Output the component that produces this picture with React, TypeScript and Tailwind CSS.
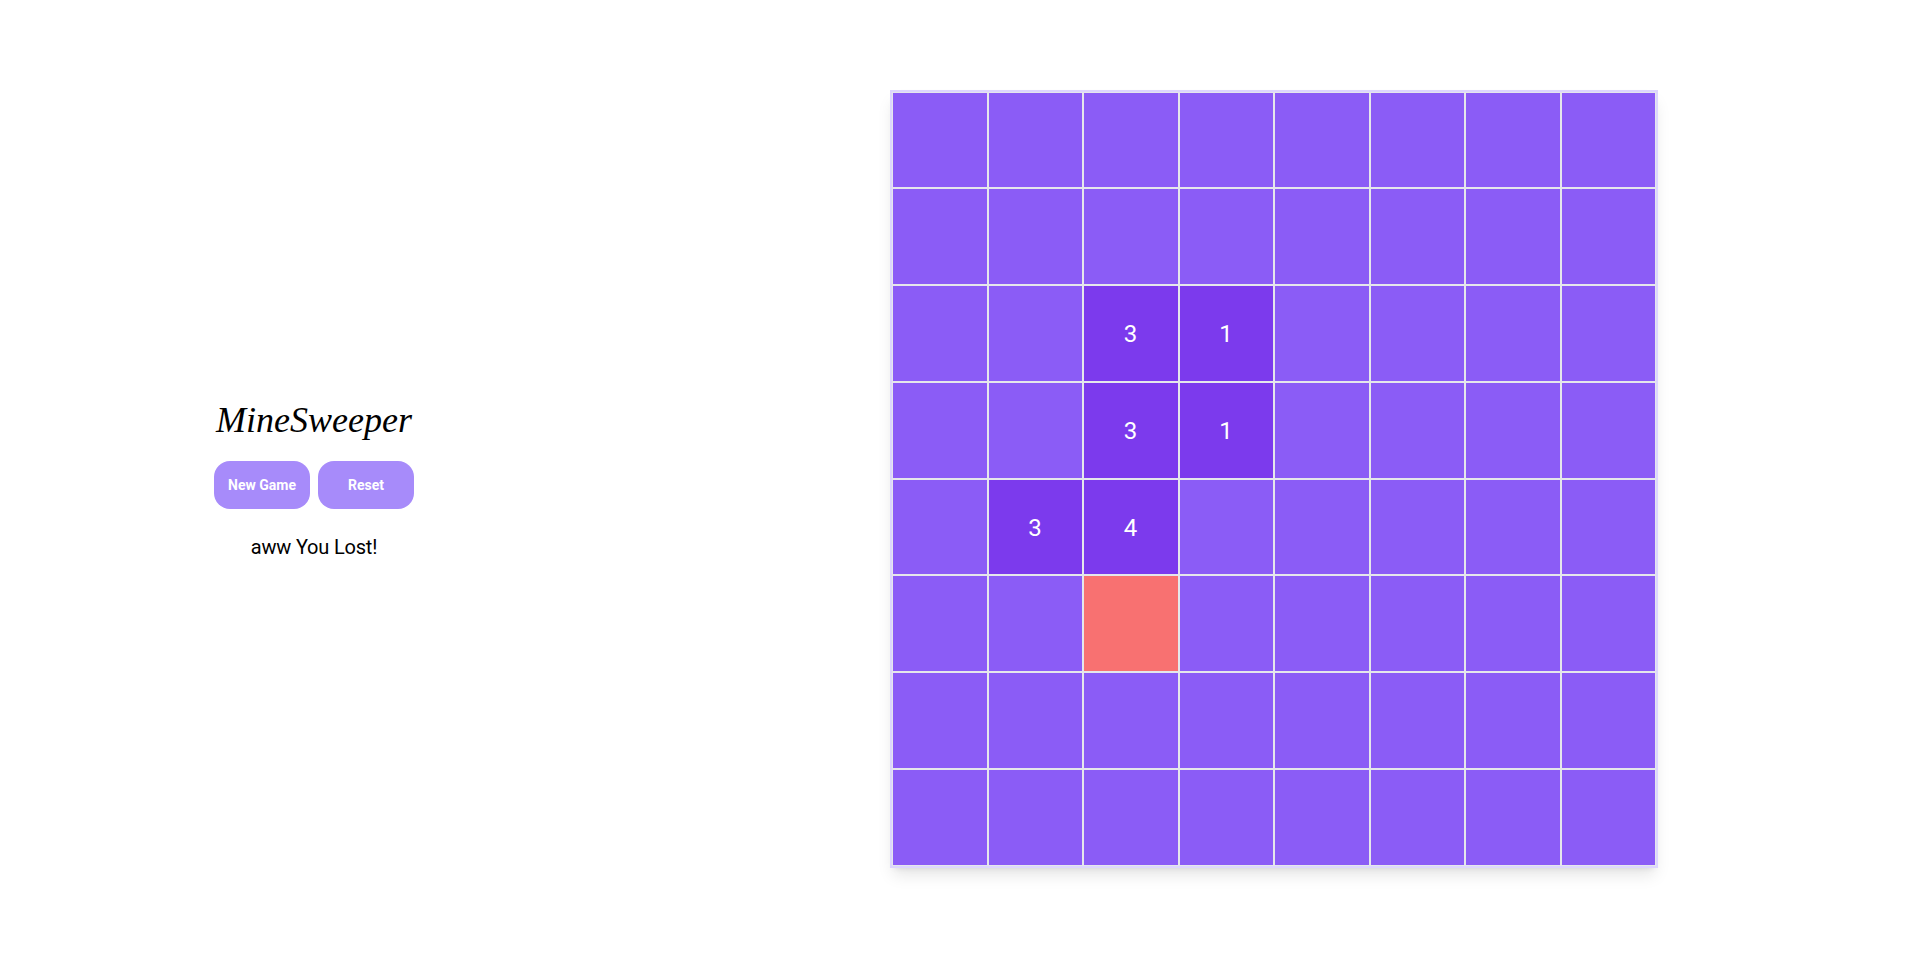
// App.tsx - MineSweeper board after a lost game
import React from "react";

type Cell = { revealed?: boolean; value?: number; mine?: boolean };

const SIZE = 8;

// only the cells that differ from a hidden one, keyed by "row-col"
const opened: Record<string, Cell> = {
  "2-2": { revealed: true, value: 3 },
  "2-3": { revealed: true, value: 1 },
  "3-2": { revealed: true, value: 3 },
  "3-3": { revealed: true, value: 1 },
  "4-1": { revealed: true, value: 3 },
  "4-2": { revealed: true, value: 4 },
  "5-2": { mine: true },
};

const BoardCell: React.FC<{ cell?: Cell }> = ({ cell }) => {
  let color = "bg-[#8b5cf6]";
  if (cell?.revealed) color = "bg-[#7c3aed]";
  if (cell?.mine) color = "bg-[#f87171]";

  return (
    <div
      className={`flex items-center justify-center border border-[#e5e7eb] pt-[2px] pr-px text-2xl text-white ${color}`}
    >
      {cell?.value}
    </div>
  );
};

const App: React.FC = () => {
  const rows = Array.from({ length: SIZE }, (_, r) => r);
  const cols = Array.from({ length: SIZE }, (_, c) => c);

  return (
    <div className="flex h-screen w-full bg-white font-['Roboto',sans-serif] text-black">
      {/* Left panel */}
      <div className="flex w-1/3 flex-col items-center justify-center pr-[9px]">
        <h1 className="mb-4 h-12 font-['Liberation_Serif',serif] text-4xl italic leading-[47px]">
          MineSweeper
        </h1>
        <div className="flex gap-2">
          <button className="h-12 w-24 rounded-2xl bg-[#a78bfa] text-sm font-bold text-white">
            New Game
          </button>
          <button className="h-12 w-24 rounded-2xl bg-[#a78bfa] text-sm font-bold text-white">
            Reset
          </button>
        </div>
        <p className="mt-6 text-xl leading-7 tracking-[-0.2px]">aww You Lost!</p>
      </div>

      {/* Board */}
      <div className="flex w-2/3 items-center justify-center pl-[0.5px]">
        <div className="mb-px grid h-[778px] w-[768px] grid-cols-8 grid-rows-8 border-2 border-[#ddd6fe] shadow-lg">
          {rows.map((r) =>
            cols.map((c) => <BoardCell key={`${r}-${c}`} cell={opened[`${r}-${c}`]} />)
          )}
        </div>
      </div>
    </div>
  );
};

export default App;
